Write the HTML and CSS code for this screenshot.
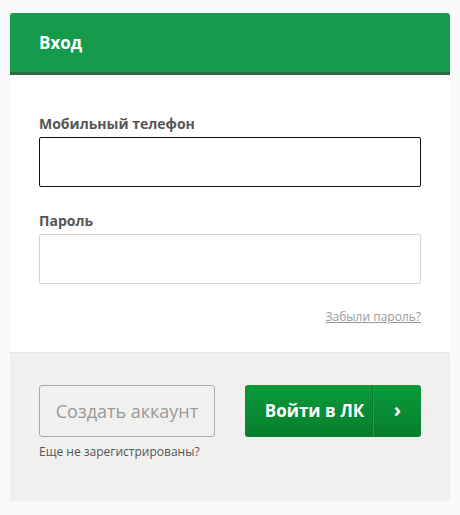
FILE: index.html
```html
<!DOCTYPE html>
<html lang="ru">
<head>
    <meta charset="UTF-8">
    <title>Вход</title>
    <link rel="stylesheet" href="styles.css">
</head>
<body>
    <div class="login">
        <div class="login-head">Вход</div>

        <div class="login-body">
            <label class="field-label" for="phone">Мобильный телефон</label>
            <input id="phone" class="field field-active" type="text">

            <label class="field-label" for="pass">Пароль</label>
            <input id="pass" class="field" type="password">

            <div class="forgot"><a href="#">Забыли пароль?</a></div>
        </div>

        <div class="login-foot">
            <div class="register">
                <button class="btn-outline">Создать аккаунт</button>
                <div class="register-hint">Еще не зарегистрированы?</div>
            </div>
            <button class="btn-enter">
                <span class="btn-enter-text">Войти в ЛК</span>
                <span class="btn-enter-arrow">›</span>
            </button>
        </div>
    </div>
</body>
</html>
```

FILE: styles.css
```css
body {
    margin: 0;
    padding: 13px 10px;
    background-color: #fafafa;
    font-family: "Open Sans", "Noto Sans", sans-serif;
}
.login {
    background-color: white;
    border-radius: 3px 3px 0 0;
}
.login-head {
    height: 59px;
    line-height: 59px;
    padding: 0 29px;
    background-color: #169b4c;
    border-bottom: 3px solid #2d6a44;
    border-radius: 3px 3px 0 0;
    color: white;
    font-size: 17px;
    font-weight: bold;
}
.login-body {
    padding: 39px 29px 27px;
}
.field-label {
    display: block;
    margin-bottom: 4px;
    color: #555;
    font-size: 14px;
    font-weight: bold;
}
.field {
    display: block;
    box-sizing: border-box;
    width: 100%;
    height: 50px;
    margin: 0 0 24px;
    border: 1px solid #d4d4d4;
    border-radius: 2px;
    background: white;
    outline: none;
}
.field-active {
    border-color: #111;
}
.forgot {
    text-align: right;
    font-size: 12px;
    margin-top: 5px;
}
.forgot a {
    color: #999;
}
.login-foot {
    display: flex;
    justify-content: space-between;
    align-items: flex-start;
    padding: 32px 29px 41px;
    background-color: #f0f0ee;
    border-top: 1px solid #e6e6e3;
}
.register-hint {
    margin-top: 6px;
    color: #555;
    font-size: 12px;
}
.btn-outline {
    width: 176px;
    height: 52px;
    border: 1px solid #a9a9a9;
    border-radius: 3px;
    background: transparent;
    color: #999;
    font-family: inherit;
    font-size: 18px;
}
.btn-enter {
    display: flex;
    width: 176px;
    height: 52px;
    padding: 0;
    border: none;
    border-radius: 3px;
    background: linear-gradient(#0a9b3b, #077d2c);
    color: white;
    font-family: inherit;
    font-weight: bold;
    cursor: pointer;
}
.btn-enter-text {
    flex: 1;
    padding-left: 12px;
    line-height: 52px;
    font-size: 17px;
    border-right: 1px solid #0c7632;
}
.btn-enter-arrow {
    width: 47px;
    line-height: 50px;
    font-size: 20px;
    border-left: 1px solid #17a048;
}
```
